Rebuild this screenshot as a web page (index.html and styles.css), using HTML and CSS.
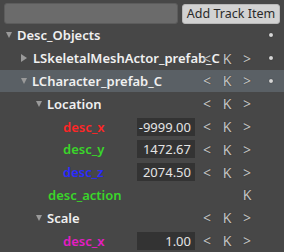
FILE: index.html
```html
<!DOCTYPE html>
<html>
<head>
<meta charset="utf-8">
<link rel="stylesheet" href="styles.css">
</head>
<body>
<div class="panel">
  <div class="topbar">
    <div class="search"></div>
    <button class="add-btn">Add Track Item</button>
  </div>
  <div class="tree">
    <div class="row">
      <div class="label lvl0"><span class="tri down"></span><span class="name">Desc_Objects</span></div>
      <span class="ctl"></span><span class="ctl"></span><span class="ctl"></span>
      <span class="dotcell"><span class="dot"></span></span>
    </div>
    <div class="row">
      <div class="label lvl1"><span class="tri right"></span><span class="name">LSkeletalMeshActor_prefab_C</span></div>
      <span class="ctl">&lt;</span><span class="ctl">K</span><span class="ctl">&gt;</span>
      <span class="dotcell"><span class="dot"></span></span>
    </div>
    <div class="row selected">
      <div class="label lvl1"><span class="tri down"></span><span class="name">LCharacter_prefab_C</span></div>
      <span class="ctl">&lt;</span><span class="ctl">K</span><span class="ctl">&gt;</span>
      <span class="dotcell"><span class="dot"></span></span>
    </div>
    <div class="row">
      <div class="label lvl2"><span class="tri down"></span><span class="name">Location</span></div>
      <span class="ctl">&lt;</span><span class="ctl">K</span><span class="ctl">&gt;</span>
      <span class="dotcell"></span>
    </div>
    <div class="row">
      <div class="label lvl3"><span class="name red">desc_x</span></div>
      <span class="value">-9999.00</span>
      <span class="ctl">&lt;</span><span class="ctl">K</span><span class="ctl">&gt;</span>
      <span class="dotcell"></span>
    </div>
    <div class="row">
      <div class="label lvl3"><span class="name green">desc_y</span></div>
      <span class="value">1472.67</span>
      <span class="ctl">&lt;</span><span class="ctl">K</span><span class="ctl">&gt;</span>
      <span class="dotcell"></span>
    </div>
    <div class="row">
      <div class="label lvl3"><span class="name blue">desc_z</span></div>
      <span class="value">2074.50</span>
      <span class="ctl">&lt;</span><span class="ctl">K</span><span class="ctl">&gt;</span>
      <span class="dotcell"></span>
    </div>
    <div class="row">
      <div class="label lvl2 plain"><span class="name green">desc_action</span></div>
      <span class="ctl"></span><span class="ctl"></span><span class="ctl">K</span>
      <span class="dotcell"></span>
    </div>
    <div class="row">
      <div class="label lvl2"><span class="tri down"></span><span class="name">Scale</span></div>
      <span class="ctl">&lt;</span><span class="ctl">K</span><span class="ctl">&gt;</span>
      <span class="dotcell"></span>
    </div>
    <div class="row">
      <div class="label lvl3"><span class="name magenta">desc_x</span></div>
      <span class="value">1.00</span>
      <span class="ctl">&lt;</span><span class="ctl">K</span><span class="ctl">&gt;</span>
      <span class="dotcell"></span>
    </div>
  </div>
</div>
</body>
</html>
```

FILE: styles.css
```css
html, body {
  margin: 0;
  padding: 0;
  background: #474747;
}
.panel {
  width: 284px;
  height: 252px;
  overflow: hidden;
  background: #474747;
  font-family: "Noto Sans", "Open Sans", sans-serif;
  color: #ececec;
}
.topbar {
  display: flex;
  align-items: flex-start;
  gap: 4px;
  padding: 3px 4px 0 4px;
  height: 21px;
}
.search {
  flex: 1;
  height: 19px;
  background: #6b6b6b;
  border: 1px solid #5c5c5c;
  border-radius: 3px;
}
.add-btn {
  margin: 1px 0 0 0;
  width: 98px;
  height: 20px;
  padding: 0;
  border: 1px solid #b8b8b8;
  border-radius: 3px;
  background: #d2d2d2;
  color: #2a2a2a;
  font-family: "Noto Sans", "Open Sans", sans-serif;
  font-size: 12.5px;
  line-height: 18px;
}
.tree {
  display: flex;
  flex-direction: column;
}
.row {
  display: flex;
  align-items: center;
  height: 22.8px;
}
.row.selected {
  background: #5a6065;
}
.label {
  flex: 1;
  min-width: 0;
  display: flex;
  align-items: center;
  white-space: nowrap;
  overflow: visible;
}
.lvl0 { padding-left: 6px; }
.lvl1 { padding-left: 21px; }
.lvl2 { padding-left: 36px; }
.lvl2.plain { padding-left: 48px; }
.lvl3 { padding-left: 63px; }
.tri {
  display: inline-block;
  width: 0;
  height: 0;
  margin-right: 5px;
}
.tri.down {
  border-left: 3.5px solid transparent;
  border-right: 3.5px solid transparent;
  border-top: 6px solid #9a9a9a;
}
.tri.right {
  border-top: 4px solid transparent;
  border-bottom: 4px solid transparent;
  border-left: 6px solid #9a9a9a;
  margin-right: 6px;
}
.name {
  font-size: 13px;
  font-weight: 600;
  color: #f0f0f0;
}
.name.red { color: #ff2626; }
.name.green { color: #3ad62a; }
.name.blue { color: #2a2aff; }
.name.magenta { color: #e51cc4; }
.value {
  width: 58px;
  height: 18px;
  box-sizing: border-box;
  background: #333333;
  color: #e4e4e4;
  font-size: 13px;
  line-height: 18px;
  text-align: right;
  padding-right: 4px;
  margin-right: 2px;
}
.ctl {
  width: 20px;
  text-align: center;
  font-size: 14px;
  color: #c4c4c4;
  text-shadow: 0 0 1px #2a2a2a;
}
.dotcell {
  width: 27px;
  display: flex;
  justify-content: center;
  align-items: center;
}
.dot {
  width: 4px;
  height: 4px;
  border-radius: 50%;
  background: #d6d6d6;
  box-shadow: 0 0 1px #222;
}
```
